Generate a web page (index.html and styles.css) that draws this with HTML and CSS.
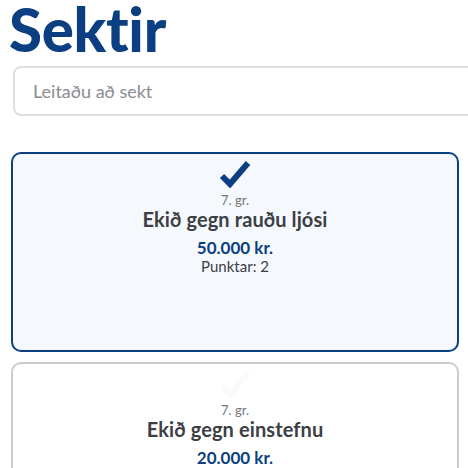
FILE: index.html
```html
<!DOCTYPE html>
<html lang="is">
<head>
<meta charset="utf-8">
<link rel="stylesheet" href="styles.css">
</head>
<body>
<main class="page">
  <h1 class="title">Sektir</h1>
  <div class="search">
    <input class="search-input" type="text" placeholder="Leitaðu að sekt">
  </div>
  <ul class="list">
    <li class="card selected">
      <svg class="check" viewBox="0 0 32 28" width="32" height="28"><path d="M3 16 L11 24 L29 3" fill="none" stroke="currentColor" stroke-width="6" stroke-linejoin="miter"/></svg>
      <div class="article">7. gr.</div>
      <div class="name">Ekið gegn rauðu ljósi</div>
      <div class="price">50.000 kr.</div>
      <div class="points">Punktar: 2</div>
    </li>
    <li class="card">
      <svg class="check faint" viewBox="0 0 32 28" width="32" height="28"><path d="M3 16 L11 24 L29 3" fill="none" stroke="currentColor" stroke-width="6"/></svg>
      <div class="article">7. gr.</div>
      <div class="name">Ekið gegn einstefnu</div>
      <div class="price">20.000 kr.</div>
      <div class="points">Punktar: 1</div>
    </li>
  </ul>
</main>
</body>
</html>
```
FILE: styles.css
```css
html, body { margin: 0; padding: 0; overflow: hidden; background: #fff; }
body { font-family: Lato, "Noto Sans", sans-serif; }
.page { padding: 0 9px 0 11px; width: 448px; }
.title {
  margin: 0; padding: 0;
  font-size: 60px; line-height: 62px; font-weight: 900;
  color: #0b3f82; letter-spacing: -0.3px;
  margin-left: -2px; margin-top: -2px;
}
.search { margin-top: 6px; }
.search-input {
  box-sizing: border-box;
  width: 480px; height: 50px;
  margin-left: 2px;
  border: 2px solid #dde0e0; border-radius: 8px;
  padding: 0 18px;
  font-family: inherit; font-size: 18px; color: #333;
  outline: none;
}
.search-input::placeholder { color: #8a8d90; }
.list { list-style: none; margin: 36px 0 0; padding: 0; display: flex; flex-direction: column; gap: 10px; }
.card {
  box-sizing: border-box; height: 200px;
  border: 2px solid #cccccc; border-radius: 10px; background: #fff;
  display: flex; flex-direction: column; align-items: center;
  padding-top: 6px;
}
.card.selected { border-color: #0b3f82; background: #f5f8fd; }
.check { color: #0b3f82; display: block; }
.check.faint { color: #fafafa; }
.article { font-size: 13px; color: #777; line-height: 16px; margin-top: 4px; }
.name { font-size: 20px; font-weight: 700; color: #3c4044; line-height: 22px; letter-spacing: 0.1px; }
.price { font-size: 17px; font-weight: 700; color: #0b3f82; margin-top: 8px; line-height: 20px; }
.points { font-size: 15px; color: #3c4044; line-height: 17px; }
```
